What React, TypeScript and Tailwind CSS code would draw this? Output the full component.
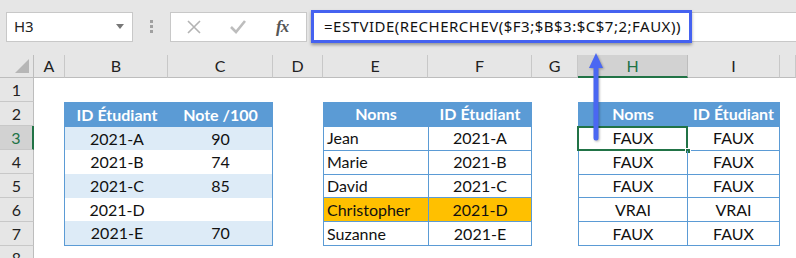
import React from 'react';

const cols = ['A', 'B', 'C', 'D', 'E', 'F', 'G', 'H', 'I', ''];
const notes = [
    ['2021-A', '90'],
    ['2021-B', '74'],
    ['2021-C', '85'],
    ['2021-D', ''],
    ['2021-E', '70'],
];
const noms = [
    ['Jean', '2021-A'],
    ['Marie', '2021-B'],
    ['David', '2021-C'],
    ['Christopher', '2021-D'],
    ['Suzanne', '2021-E'],
];
const resultats = [
    ['FAUX', 'FAUX'],
    ['FAUX', 'FAUX'],
    ['FAUX', 'FAUX'],
    ['VRAI', 'VRAI'],
    ['FAUX', 'FAUX'],
];

function Toolbar() {
    return (
        <div className="flex items-center h-[55px] bg-[#e6e6e6] pb-[2px] font-['Noto_Sans',sans-serif]">
            <div className="ml-[6px] w-[127px] h-[30px] bg-white border border-[#c8c8c8] flex items-center justify-between pl-[7px] pr-[8px]">
                <span className="text-[15px] text-[#222]">H3</span>
                <span className="w-0 h-0 border-l-[4px] border-r-[4px] border-t-[5px] border-l-transparent border-r-transparent border-t-[#777]" />
            </div>
            <div className="w-[37px] flex flex-col items-center gap-[2px]">
                <span className="w-[3px] h-[3px] bg-[#a0a0a0]" />
                <span className="w-[3px] h-[3px] bg-[#a0a0a0]" />
                <span className="w-[3px] h-[3px] bg-[#a0a0a0]" />
            </div>
            <div className="w-[137px] h-[30px] bg-white border border-[#c8c8c8] flex items-center">
                <svg width="14" height="14" viewBox="0 0 14 14" className="ml-[16px]">
                    <path d="M1 1 L13 13 M13 1 L1 13" stroke="#b3b3b3" strokeWidth="1.6" fill="none" />
                </svg>
                <svg width="16" height="14" viewBox="0 0 16 14" className="ml-[29px]">
                    <path d="M1 7 L6 12 L15 1" stroke="#bdbdbd" strokeWidth="2.6" fill="none" />
                </svg>
                <span className="ml-[30px] font-['Liberation_Serif',serif] italic font-bold text-[17px] text-[#555] tracking-[-1px]">fx</span>
            </div>
            <div className="flex-1 ml-[5px] h-[30px] bg-white border-y border-[#c8c8c8] flex items-center">
                <div className="w-[381px] h-[33px] -ml-[1px] border-[3px] border-[#4562f0] bg-white flex items-center pl-[10px] shadow-[0_2px_3px_rgba(0,0,0,0.35)]">
                    <span className="text-[15px] tracking-[0.5px] text-[#111] whitespace-nowrap">=ESTVIDE(RECHERCHEV($F3;$B$3:$C$7;2;FAUX))</span>
                </div>
            </div>
        </div>
    );
}

export default function App() {
    return (
        <div className="relative w-[796px] h-[258px] overflow-hidden bg-white">
            <Toolbar />
            <div className="grid grid-cols-[34px_31px_103px_105px_50px_105px_104px_46px_110px_92px_1fr] grid-rows-[23px_repeat(8,24px)] font-['Lato',sans-serif] text-[16px] text-[#111]">
                {/* coin */}
                <div className="bg-[#e6e6e6] border-r border-b border-[#bdbdbd] relative">
                    <svg width="14" height="14" viewBox="0 0 14 14" className="absolute right-[4px] bottom-[4px]">
                        <polygon points="14,0 14,14 0,14" fill="#b6b6b6" />
                    </svg>
                </div>
                {cols.map((c, i) => (
                    <div
                        key={'h' + i}
                        className={
                            c === 'H'
                                ? 'bg-[#d2d2d2] border-r border-[#bdbdbd] border-b-2 border-b-[#217346] flex items-center justify-center text-[#217346]'
                                : 'bg-[#e6e6e6] border-r border-b border-[#c8c8c8] border-b-[#bdbdbd] flex items-center justify-center text-[#222]'
                        }
                    >
                        {c}
                    </div>
                ))}

                {[1, 2, 3, 4, 5, 6, 7, 8].map((r) => (
                    <div
                        key={'r' + r}
                        style={{ gridColumnStart: 1, gridRowStart: r + 1 }}
                        className={
                            r === 3
                                ? 'bg-[#d2d2d2] border-b border-[#c8c8c8] border-r-2 border-r-[#217346] flex items-center justify-center text-[#217346]'
                                : 'bg-[#e6e6e6] border-b border-[#c8c8c8] border-r border-r-[#bdbdbd] flex items-center justify-center text-[#222]'
                        }
                    >
                        {r}
                    </div>
                ))}

                {/* Tableau B:C */}
                <div className="col-start-3 col-span-2 row-start-3 row-span-6 -ml-[1px] border border-[#5b9bd5] grid grid-cols-[104px_1fr] grid-rows-6">
                    <div className="bg-[#5b9bd5] text-white font-bold flex items-center justify-center">ID Étudiant</div>
                    <div className="bg-[#5b9bd5] text-white font-bold flex items-center justify-center">Note /100</div>
                    {notes.map((n, i) => (
                        <React.Fragment key={'n' + i}>
                            <div className={(i % 2 === 0 ? 'bg-[#ddebf7]' : 'bg-white') + ' flex items-center justify-center'}>{n[0]}</div>
                            <div className={(i % 2 === 0 ? 'bg-[#ddebf7]' : 'bg-white') + ' flex items-center justify-center'}>{n[1]}</div>
                        </React.Fragment>
                    ))}
                </div>

                {/* Tableau E:F */}
                <div className="col-start-6 col-span-2 row-start-3 row-span-6 border-l border-t border-[#5b9bd5] grid grid-cols-[105px_1fr] grid-rows-6">
                    <div className="bg-[#5b9bd5] text-white font-bold flex items-center justify-center border-r border-b border-[#5b9bd5]">Noms</div>
                    <div className="bg-[#5b9bd5] text-white font-bold flex items-center justify-center border-r border-b border-[#5b9bd5]">ID Étudiant</div>
                    {noms.map((n, i) => (
                        <React.Fragment key={'m' + i}>
                            <div className={(i === 3 ? 'bg-[#ffc000]' : 'bg-white') + ' flex items-center pl-[3px] border-r border-b border-[#5b9bd5]'}>{n[0]}</div>
                            <div className={(i === 3 ? 'bg-[#ffc000]' : 'bg-white') + ' flex items-center justify-center border-r border-b border-[#5b9bd5]'}>{n[1]}</div>
                        </React.Fragment>
                    ))}
                </div>

                {/* Tableau H:I */}
                <div className="col-start-9 col-span-2 row-start-3 row-span-6 border-l border-t border-[#5b9bd5] grid grid-cols-[109px_1fr] grid-rows-6">
                    <div className="bg-[#5b9bd5] text-white font-bold flex items-center justify-center border-r border-b border-[#5b9bd5]">Noms</div>
                    <div className="bg-[#5b9bd5] text-white font-bold flex items-center justify-center border-r border-b border-[#5b9bd5]">ID Étudiant</div>
                    {resultats.map((n, i) => (
                        <React.Fragment key={'v' + i}>
                            <div className="relative flex items-center justify-center border-r border-b border-[#5b9bd5]">
                                {n[0]}
                                {i === 0 && (
                                    <>
                                        <span className="absolute -left-[2px] -top-[1px] -right-[1px] -bottom-[1px] border-2 border-[#217346]" />
                                        <span className="absolute -right-[4px] -bottom-[4px] w-[6px] h-[6px] bg-[#217346] border border-white" />
                                    </>
                                )}
                            </div>
                            <div className="flex items-center justify-center border-r border-b border-[#5b9bd5]">{n[1]}</div>
                        </React.Fragment>
                    ))}
                </div>
            </div>

            {/* flèche */}
            <svg width="22" height="96" viewBox="0 0 22 96" className="absolute left-[585px] top-[50px] drop-shadow-[1px_1px_1px_rgba(0,0,0,0.3)]">
                <line x1="11" y1="15" x2="11" y2="88" stroke="#4a67f2" strokeWidth="5" strokeLinecap="round" />
                <polygon points="4,18 11,3 18,18" fill="#4a67f2" />
            </svg>
        </div>
    );
}
